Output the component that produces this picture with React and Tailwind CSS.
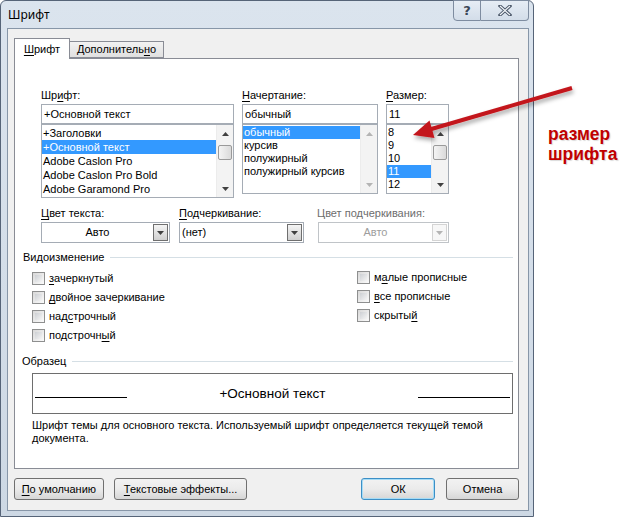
import React from "react";

const U = ({ children }) => (
  <span className="underline decoration-1 underline-offset-[2px]">{children}</span>
);

function Arrow({ up, disabled }) {
  return (
    <svg width="7" height="4" viewBox="0 0 7 4">
      <path d={up ? "M0 4 L3.5 0 L7 4Z" : "M0 0 L3.5 4 L7 0Z"} fill={disabled ? "#b4b4b4" : "#404040"} />
    </svg>
  );
}

function ScrollBar({ thumb, disabled, thumbMt }) {
  return (
    <div className="w-[17px] h-full flex flex-col bg-[#f3f3f3] border-l border-[#ececec]">
      <div className="h-[17px] flex items-center justify-center">
        <Arrow up disabled={disabled} />
      </div>
      <div className="flex-1 flex flex-col">
        {thumb && (
          <div className={`${thumbMt} mx-[1px] h-[15px] rounded-[2px] border border-[#9a9a9a] bg-gradient-to-r from-[#f4f4f4] to-[#dadada]`} />
        )}
      </div>
      <div className="h-[17px] flex items-center justify-center">
        <Arrow disabled={disabled} />
      </div>
    </div>
  );
}

function Check({ label }) {
  return (
    <div className="flex items-center h-[19px]">
      <div className="w-[13px] h-[13px] border border-[#8e8f8f] bg-gradient-to-br from-[#d8d8d8] to-[#fbfbfb] p-[2px]">
        <div className="w-full h-full bg-gradient-to-br from-[#cdd0d4] to-[#f4f4f4]" />
      </div>
      <span className="ml-[4px]">{label}</span>
    </div>
  );
}

function Combo({ className, text, center, disabled }) {
  return (
    <div className={`${className} h-[21px] border ${disabled ? "border-[#c0c4c8]" : "border-[#a5acb5]"} bg-white flex items-center`}>
      <div className={`flex-1 ${center ? "text-center" : "pl-[2px]"} ${disabled ? "text-[#9d9d9d]" : ""}`}>{text}</div>
      <div className={`w-[15px] h-[17px] mr-[1px] border flex items-center justify-center ${disabled ? "border-[#d4d4d4] bg-[#f7f7f7]" : "border-[#6f6f6f] bg-gradient-to-b from-[#f4f4f4] to-[#d0d0d0]"}`}>
        <Arrow disabled={disabled} />
      </div>
    </div>
  );
}

function Button({ className, children, def }) {
  return (
    <div className={`${className} h-[22px] rounded-[3px] border ${def ? "border-[#3c8fc6] shadow-[inset_0_0_0_1px_#a6dcf6]" : "border-[#707070]"} bg-gradient-to-b from-[#f2f2f2] via-[#ebebeb] to-[#d6d6d6] flex items-center justify-center`}>
      {children}
    </div>
  );
}

function Window() {
  return (
    <div className="w-[534px] h-[517px] flex flex-col rounded-t-[6px] border border-[#566478] bg-gradient-to-b from-[#dbe4ee] to-[#cdd8e4]">
      <div className="h-[27px] flex items-start">
        <span className="ml-[7px] mt-[6px] text-[12px] leading-[16px] font-['Noto_Sans',sans-serif]">Шрифт</span>
        <div className="ml-auto mr-[4px] -mt-px flex h-[21px]">
          <div className="w-[28px] h-full border border-[#7e8ca0] rounded-bl-[4px] bg-gradient-to-b from-[#e6edf5] to-[#d3dde9] flex items-center justify-center">
            <span className="text-[13px] font-bold leading-none text-[#3a4656] font-['DejaVu_Sans',sans-serif]">?</span>
          </div>
          <div className="w-[48px] h-full border border-l-0 border-[#7e8ca0] rounded-br-[4px] bg-gradient-to-b from-[#e6edf5] to-[#d3dde9] flex items-center justify-center">
            <svg width="14" height="11" viewBox="0 0 14 11">
              <path d="M2 1 L12 10 M12 1 L2 10" stroke="#4a5668" strokeWidth="3.2" strokeLinecap="square" />
              <path d="M2 1 L12 10 M12 1 L2 10" stroke="#f4f7fa" strokeWidth="1.2" />
            </svg>
          </div>
        </div>
      </div>
      <div className="ml-[6px] mr-[4px] mb-[5px] flex-1 border border-[#8796a8] bg-[#f0f0f0] flex flex-col pl-[6px] pr-[9px] pt-[9px]">
        {/* tabs */}
        <div className="flex items-end h-[20px]">
          <div className="relative z-10 -mb-px w-[56px] h-[21px] border border-b-0 border-[#898c95] bg-white flex items-start justify-center pt-[4px]">
            <span><U>Ш</U>рифт</span>
          </div>
          <div className="w-[94px] h-[17px] border border-l-0 border-[#898c95] bg-gradient-to-b from-[#f2f2f2] to-[#e0e0e0] flex items-center justify-center">
            <span>Дополнитель<U>н</U>о</span>
          </div>
        </div>
        {/* panel */}
        <div className="w-[505px] h-[411px] border border-[#898c95] bg-white flex flex-col">
          {/* lists */}
          <div className="flex pl-[26px] mt-[30px]">
            <div className="w-[193px] flex flex-col">
              <div className="h-[13px]">Шр<U>и</U>фт:</div>
              <div className="mt-[2px] h-[20px] border border-[#a5acb5] flex items-center pl-[2px]">+Основной текст</div>
              <div className="h-[74px] border border-[#a5acb5] flex">
                <div className="flex-1 flex flex-col pt-[1px]">
                  <div className="h-[14px] leading-[14px] pl-[1px]">+Заголовки</div>
                  <div className="h-[14px] leading-[14px] pl-[1px] bg-[#3399ff] text-white">+Основной текст</div>
                  <div className="h-[14px] leading-[14px] pl-[1px]">Adobe Caslon Pro</div>
                  <div className="h-[14px] leading-[14px] pl-[1px]">Adobe Caslon Pro Bold</div>
                  <div className="h-[14px] leading-[14px] pl-[1px]">Adobe Garamond Pro</div>
                </div>
                <ScrollBar thumb thumbMt="mt-[3px]" />
              </div>
            </div>
            <div className="ml-[8px] w-[136px] flex flex-col">
              <div className="h-[13px]"><U>Н</U>ачертание:</div>
              <div className="mt-[2px] h-[20px] border border-[#a5acb5] flex items-center pl-[2px]">обычный</div>
              <div className="h-[70px] border border-[#a5acb5] flex">
                <div className="flex-1 flex flex-col pt-[1px]">
                  <div className="h-[13px] pl-[1px] bg-[#3399ff] text-white">обычный</div>
                  <div className="h-[13px] pl-[1px]">курсив</div>
                  <div className="h-[13px] pl-[1px]">полужирный</div>
                  <div className="h-[13px] pl-[1px]">полужирный курсив</div>
                </div>
                <ScrollBar disabled />
              </div>
            </div>
            <div className="ml-[8px] w-[63px] flex flex-col">
              <div className="h-[13px]"><U>Р</U>азмер:</div>
              <div className="mt-[2px] h-[20px] border border-[#a5acb5] flex items-center pl-[2px]">11</div>
              <div className="h-[70px] border border-[#a5acb5] flex">
                <div className="flex-1 flex flex-col pt-[1px]">
                  <div className="h-[13px] pl-[1px]">8</div>
                  <div className="h-[13px] pl-[1px]">9</div>
                  <div className="h-[13px] pl-[1px]">10</div>
                  <div className="h-[13px] pl-[1px] bg-[#3399ff] text-white">11</div>
                  <div className="h-[13px] pl-[1px]">12</div>
                </div>
                <ScrollBar thumb thumbMt="mt-[3px]" />
              </div>
            </div>
          </div>
          {/* colors */}
          <div className="flex pl-[26px] mt-[9px]">
            <div className="w-[129px] flex flex-col">
              <div className="h-[13px]"><U>Ц</U>вет текста:</div>
              <Combo className="mt-[2px] w-full" text="Авто" center />
            </div>
            <div className="ml-[9px] w-[125px] flex flex-col">
              <div className="h-[13px]"><U>П</U>одчеркивание:</div>
              <Combo className="mt-[2px] w-full" text="(нет)" />
            </div>
            <div className="ml-[14px] w-[131px] flex flex-col">
              <div className="h-[13px] text-[#6d6d6d] -ml-px">Цвет подчеркивания:</div>
              <Combo className="mt-[2px] w-full" text="Авто" center disabled />
            </div>
          </div>
          {/* effects */}
          <div className="flex items-center mt-[8px] pl-[8px] pr-[5px] h-[13px]">
            <span>Видоизменение</span>
            <div className="flex-1 ml-[6px] h-px bg-[#d5dfe5]" />
          </div>
          <div className="flex mt-[5px]">
            <div className="ml-[17px] w-[325px] flex flex-col">
              <Check label={<><U>з</U>ачеркнутый</>} />
              <Check label={<><U>д</U>войное зачеркивание</>} />
              <Check label={<>над<U>с</U>трочный</>} />
              <Check label={<>подстрочн<U>ы</U>й</>} />
            </div>
            <div className="flex flex-col -mt-px">
              <Check label={<>м<U>а</U>лые прописные</>} />
              <Check label={<><U>в</U>се прописные</>} />
              <Check label={<>скрыты<U>й</U></>} />
            </div>
          </div>
          {/* sample */}
          <div className="flex items-center mt-[10px] pl-[7px] pr-[5px] h-[13px]">
            <span>Образец</span>
            <div className="flex-1 ml-[6px] h-px bg-[#d5dfe5]" />
          </div>
          <div className="ml-[17px] mt-[5px] w-[481px] h-[41px] border border-[#6e6e6e] flex items-center px-[2px]">
            <div className="w-[92px] h-px bg-black mt-[8px]" />
            <div className="flex-1 text-center text-[13.5px] leading-[16px]">+Основной текст</div>
            <div className="w-[92px] h-px bg-black mt-[8px]" />
          </div>
          <div className="ml-[17px] mt-[5px]">
            Шрифт темы для основного текста. Используемый шрифт определяется текущей темой
            <br />
            документа.
          </div>
        </div>
        {/* buttons */}
        <div className="flex mt-[9px]">
          <Button className="w-[90px]"><span><U>П</U>о умолчанию</span></Button>
          <Button className="ml-[10px] w-[134px]"><span><U>Т</U>екстовые эффекты...</span></Button>
          <Button className="ml-[114px] w-[74px]" def>ОК</Button>
          <Button className="ml-[11px] w-[73px]">Отмена</Button>
        </div>
      </div>
    </div>
  );
}

export default function App() {
  return (
    <div className="relative w-[631px] h-[519px] bg-white flex font-['Liberation_Sans',Arial,sans-serif] text-[11px] leading-[13px] text-black overflow-hidden">
      <Window />
      <div className="flex flex-col gap-[1px] pt-[125px] pl-[14px] text-[17.5px] leading-[19px] font-bold text-[#c00000] [text-shadow:1px_1px_1px_rgba(0,0,0,0.15)]">
        <span>размер</span>
        <span>шрифта</span>
      </div>
      <svg className="absolute left-0 top-0 pointer-events-none" width="631" height="519" viewBox="0 0 631 519">
        <defs>
          <filter id="sh" x="-20%" y="-40%" width="140%" height="200%">
            <feDropShadow dx="1" dy="3" stdDeviation="2" floodColor="#000" floodOpacity="0.35" />
          </filter>
        </defs>
        <g filter="url(#sh)">
          <line x1="572" y1="88" x2="428" y2="130" stroke="#c3161c" strokeWidth="4" />
          <polygon points="413,135 429.5,120.5 434.5,138" fill="#c3161c" />
        </g>
      </svg>
    </div>
  );
}
